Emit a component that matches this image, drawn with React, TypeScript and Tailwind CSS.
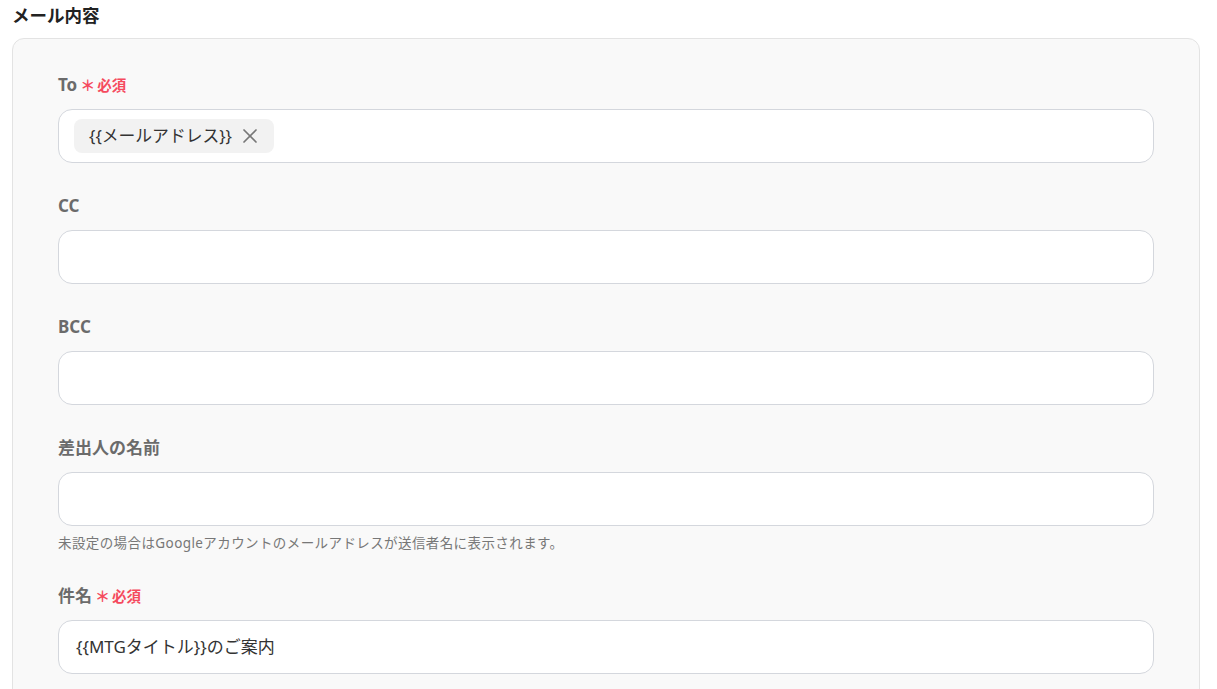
import { X } from 'lucide-react'

const font = { fontFamily: '"Noto Sans", "Noto Sans CJK JP", sans-serif' }

const Label = ({ text, required }: { text: string; required?: boolean }) => (
  <div className="flex items-center h-5 mb-[14px]">
    <span className="text-[17px] font-bold text-[#6b6b6b] leading-5">{text}</span>
    {required && (
      <>
        <span className="ml-[3px] text-[15px] font-bold text-[#f54a5e] leading-5">＊</span>
        <span className="ml-[2px] text-[14.5px] font-bold text-[#f54a5e] leading-5">必須</span>
      </>
    )}
  </div>
)

const Field = ({ children }: { children?: React.ReactNode }) => (
  <div className="h-[54px] w-full rounded-[14px] border border-[#d4d7dd] bg-white flex items-center px-[15px]">
    {children}
  </div>
)

export default function App() {
  return (
    <div className="min-h-screen bg-white pl-3 pr-[17px] pt-[3px]" style={font}>
      <h2 className="text-[17.5px] font-bold text-[#222] leading-6 mb-[11px]">メール内容</h2>

      <div className="rounded-[12px] border border-[#e3e3e3] bg-[#f9f9f9] pl-[45px] pr-[45px] pt-[36px] pb-10">
        <Label text="To" required />
        <Field>
          <div className="flex items-center h-[34px] rounded-[8px] bg-[#f2f2f2] pl-[15px] pr-[12px] gap-[6px]">
            <span className="text-[16.8px] text-[#333]">{'{{メールアドレス}}'}</span>
            <X className="w-[24px] h-[24px] text-[#777]" strokeWidth={1.7} />
          </div>
        </Field>

        <div className="mt-[33px]">
          <Label text="CC" />
          <Field />
        </div>

        <div className="mt-[33px]">
          <Label text="BCC" />
          <Field />
        </div>

        <div className="mt-[33px]">
          <Label text="差出人の名前" />
          <Field />
          <p className="mt-[9px] text-[13.5px] leading-4 tracking-[0.03em] text-[#777]">
            未設定の場合はGoogleアカウントのメールアドレスが送信者名に表示されます。
          </p>
        </div>

        <div className="mt-[35px]">
          <Label text="件名" required />
          <Field>
            <span className="text-[17px] text-[#333] pl-[2px]">{'{{MTGタイトル}}のご案内'}</span>
          </Field>
        </div>
      </div>
    </div>
  )
}
